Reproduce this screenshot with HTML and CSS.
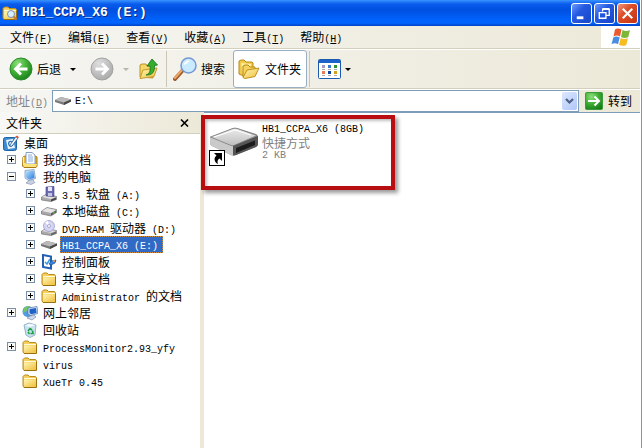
FILE: index.html
```
<!DOCTYPE html>
<html lang="zh-CN">
<head>
    <meta charset="UTF-8">
    <meta name="viewport" content="width=device-width, initial-scale=1.0">
    <title>HB1_CCPA_X6 (E:)</title>
    <link rel="stylesheet" href="styles.css">
</head>
<body>
    <!-- shared icons -->
    <svg class="defs" width="0" height="0">
        <defs>
            <linearGradient id="gFolder" x1="0" y1="0" x2="1" y2="1">
                <stop offset="0" stop-color="#fff6b5"/><stop offset="1" stop-color="#f0bf3c"/>
            </linearGradient>
            <linearGradient id="gMetal" x1="0" y1="0" x2="0" y2="1">
                <stop offset="0" stop-color="#ececec"/><stop offset="1" stop-color="#bdbdbd"/>
            </linearGradient>
            <radialGradient id="gGreen" cx=".35" cy=".25" r=".85">
                <stop offset="0" stop-color="#8be07a"/><stop offset=".5" stop-color="#3fae36"/><stop offset="1" stop-color="#157a18"/>
            </radialGradient>
            <radialGradient id="gGrey" cx=".35" cy=".25" r=".85">
                <stop offset="0" stop-color="#dedede"/><stop offset="1" stop-color="#a6a6a6"/>
            </radialGradient>
            <linearGradient id="gBlue" x1="0" y1="0" x2="1" y2="1">
                <stop offset="0" stop-color="#b4e2ff"/><stop offset="1" stop-color="#2a78dc"/>
            </linearGradient>
            <symbol id="i-folder" viewBox="0 0 16 16">
                <path d="M1 13V3.500L2.500 2H6l1.500 1.500H13.500L14.500 5v8.500L13.500 14.500H2z" fill="#f5cf5b" stroke="#b98a1c"/>
                <path d="M2 6.500h12v7H2z" fill="url(#gFolder)"/>
                <path d="M2 5.500h12" stroke="#fffbd8"/>
                <path d="M2 14.500h12.500V6" fill="none" stroke="#9a7010"/>
            </symbol>
            <symbol id="i-drive" viewBox="0 0 16 16">
                <path d="M0 7l6-3 10 2.500v2L9 12 0 9z" fill="#777"/>
                <path d="M0 7l6-3 10 2.500-7 3z" fill="#b9b9b9"/>
                <path d="M9 9.500l7-3v2L9 12z" fill="#484848"/>
            </symbol>
            <symbol id="i-disk" viewBox="0 0 16 16">
                <path d="M.5 8L6 4.500l9.500 2v3L10 13 .5 11z" fill="#a8a8a8" stroke="#666" stroke-width=".6"/>
                <path d="M1 8l5-3 9 2-5 3z" fill="#e6e6e6"/>
                <path d="M10 10.500l5-3v2l-5 3z" fill="#555"/>
                <path d="M12 10.300l1.500-1" stroke="#5e5"/>
            </symbol>
            <symbol id="i-floppy" viewBox="0 0 16 16">
                <path d="M.5 11L5 8.500l10.500 2v3L10 15.500.5 14z" fill="#aaa" stroke="#666" stroke-width=".6"/>
                <path d="M1 11l4-2 10 2-5 2z" fill="#e2e2e2"/>
                <path d="M10 13.500l5-2v2l-5 2z" fill="#444"/>
                <path d="M5 1l8-.5v10L5 10z" fill="#6a6cb4" stroke="#40407c" stroke-width=".6"/>
                <path d="M7 1h4v4H7z" fill="#e6e6f8"/>
                <path d="M7 7h4v3H7z" fill="#c4c4e4"/>
            </symbol>
            <symbol id="i-dvd" viewBox="0 0 16 16">
                <path d="M.5 11L5 8.500l10.500 2v3L10 15.500.5 14z" fill="#aaa" stroke="#666" stroke-width=".6"/>
                <path d="M1 11l4-2 10 2-5 2z" fill="#ddd"/>
                <circle cx="8" cy="6" r="5.500" fill="#d7d5f4" stroke="#9391c6" stroke-width=".7"/>
                <path d="M8 6L4 2.500 7 .8z" fill="#fff"/>
                <circle cx="8" cy="6" r="1.500" fill="#fff" stroke="#8080b0" stroke-width=".6"/>
                <path d="M10 13.500l5-2v2l-5 2z" fill="#666"/>
            </symbol>
            <symbol id="i-desktop" viewBox="0 0 16 16">
                <rect x=".5" y="2.500" width="13" height="13" rx="2" fill="#3c8ccf" stroke="#1d63a5"/>
                <path d="M3 5l7-1 2 9-7 1z" fill="#eef7ff"/>
                <path d="M10 7c-4-2-5 1-4 3s4 1 4-1" fill="none" stroke="#2b75b8" stroke-width="1.300"/>
                <path d="M7 10l6-8.500 2 1.500-6 8-2 .5z" fill="#f5f9fc" stroke="#255d94" stroke-width=".8"/>
                <path d="M12.500 2l2.500 1.500.8-1.500-1.800-1.500z" fill="#e05030"/>
            </symbol>
            <symbol id="i-docs" viewBox="0 0 16 16">
                <path d="M1 5l2-1h10l2 1v9l-1 1.500H2L.5 14z" fill="#eab938" stroke="#a87813"/>
                <path d="M4 .5h6l3 2.500v9H4z" fill="#fff" stroke="#6689ba" stroke-width=".8"/>
                <path d="M6 3h4M6 5h5M6 7h5M6 9h5" stroke="#8aaee0"/>
                <path d="M1 11h3l1 1h10l-1 3H2z" fill="#fbe27a"/>
                <path d="M1.500 5v8" stroke="#fff2a8"/>
            </symbol>
            <symbol id="i-computer" viewBox="0 0 16 16">
                <path d="M3 1.500L12 .5l1.500 9-7 2L3 9z" fill="#d8e6f4" stroke="#6a8cb4" stroke-width=".7"/>
                <path d="M4 2.500l7.500-1 1 7.500-6 1.500L4 8z" fill="url(#gBlue)"/>
                <path d="M7 11.500l4-1 1 2 1 1-4 2-5-1.500z" fill="#c9d2e2" stroke="#7a8aa6" stroke-width=".6"/>
            </symbol>
            <symbol id="i-control" viewBox="0 0 16 16">
                <path d="M2 1l8 1.500v12L2 13z" fill="#fff" stroke="#2360b4" stroke-width="2"/>
                <path d="M4 8l2 2 3-5" stroke="#3a9bdc" stroke-width="1.500" fill="none"/>
                <path d="M8 10l2-3 5-1-1 3-4 2z" fill="#3c82d8" stroke="#184e96" stroke-width=".7"/>
                <circle cx="13" cy="7" r="1" fill="#f5a050"/>
            </symbol>
            <symbol id="i-network" viewBox="0 0 16 16">
                <circle cx="6" cy="6.500" r="5.500" fill="#4f9ae0"/>
                <path d="M2 3c2-2 5-3 6-1L5 6 1 8z" fill="#74c46a"/>
                <path d="M6 3l9-1.500.8 7-7 2L6 9z" fill="#dde8f6" stroke="#4773a8" stroke-width=".7"/>
                <path d="M7.500 4l6.500-1 .6 5L9 9.300 7.500 8z" fill="#1e62c8"/>
                <path d="M8 11l4-1 2 2-4 3-5-2z" fill="#cdd8ea" stroke="#6b82a4" stroke-width=".6"/>
            </symbol>
            <symbol id="i-bin" viewBox="0 0 16 16">
                <path d="M2 3l5-2 7 2-1 10-5 2.500L4 13z" fill="#c9e2ef" stroke="#7fa6bd" stroke-width=".8"/>
                <path d="M3 3.500l5 1.500 5.500-2L7.500 1.800z" fill="#f4fbff"/>
                <path d="M6 9l2-2.500 2 1.500M10.500 8.500l.5 3H8.500M7.500 12L6 10" stroke="#1fa045" stroke-width="1.600" fill="none"/>
            </symbol>
            <symbol id="i-open" viewBox="0 0 22 20">
                <path d="M1 15V2l2-1h3l2 2h6l1 1v6L8 18z" fill="#f2ca49" stroke="#b8891b"/>
                <path d="M3 4l10 1v6l-8 5z" fill="#fff09b"/>
                <path d="M5 18V7l2-1h3l2 2h5v3" fill="#f5d35c" stroke="#b8891b"/>
                <path d="M5 18.500L9 11l12-2-4 8.500L7 19.500z" fill="url(#gFolder)" stroke="#c09120"/>
            </symbol>
        </defs>
    </svg>

    <div class="window">
        <header class="titlebar">
            <svg class="title-icon" viewBox="0 0 16 16">
                <use href="#i-folder"/>
                <circle cx="9" cy="9" r="3.500" fill="#d8efff" stroke="#7894b8"/>
                <path d="M11.500 11.500l3 3" stroke="#c9763c" stroke-width="2"/>
            </svg>
            <h1>HB1_CCPA_X6 (E:)</h1>
            <div class="win-buttons">
                <button class="win-btn" aria-label="最小化"><svg viewBox="0 0 20 20"><path d="M5 14.500h7" stroke="#fff" stroke-width="3"/></svg></button>
                <button class="win-btn" aria-label="还原"><svg viewBox="0 0 20 20"><path d="M8 8V5.500h7V12h-3M8 5h7M4.500 9h7v6h-7zM4 9h8" fill="none" stroke="#fff" stroke-width="1.400"/></svg></button>
                <button class="win-btn close" aria-label="关闭"><svg viewBox="0 0 20 20"><path d="M5 5l10 10M15 5L5 15" stroke="#fff" stroke-width="2.200"/></svg></button>
            </div>
        </header>

        <nav class="menubar">
            <button>文件<span class="en">(<u>F</u>)</span></button>
            <button>编辑<span class="en">(<u>E</u>)</span></button>
            <button>查看<span class="en">(<u>V</u>)</span></button>
            <button>收藏<span class="en">(<u>A</u>)</span></button>
            <button>工具<span class="en">(<u>T</u>)</span></button>
            <button>帮助<span class="en">(<u>H</u>)</span></button>
            <div class="flag">
                <svg viewBox="0 0 20 18">
                    <path d="M4 1.500c2-1.500 4-1 6.500 0L9 8.500c-2-1.200-4.500-1.300-6.500 0z" fill="#ea5a2c"/>
                    <path d="M11.500 2c2.500 1.500 5 1.300 7.500 0l-1.700 7c-2.300 1.300-5 1.200-7.300 0z" fill="#7db73a"/>
                    <path d="M2.300 9.500c2-1.300 4.200-1.200 6.400 0L7 16.300c-2-1.300-4.300-1.300-6.500 0z" fill="#4a8de0"/>
                    <path d="M9.700 10c2.500 1.400 5 1.300 7.300.1L15.300 17c-2.500 1.200-5 1.100-7.300-.2z" fill="#f6bc22"/>
                </svg>
            </div>
        </nav>

        <div class="toolbar">
            <button class="tool back">
                <svg class="round" viewBox="0 0 24 24"><circle cx="12" cy="12" r="11" fill="url(#gGreen)" stroke="#2c8a2a"/><path d="M18.500 12H7M12 6.500L6.500 12l5.500 5.500" fill="none" stroke="#fff" stroke-width="2.800"/></svg>
                <span>后退</span>
                <i class="arrow"></i>
            </button>
            <button class="tool forward" aria-label="前进" disabled>
                <svg class="round" viewBox="0 0 24 24"><circle cx="12" cy="12" r="11" fill="url(#gGrey)" stroke="#a3a3a3"/><path d="M5.500 12H17M12 6.500l5.500 5.500-5.500 5.500" fill="none" stroke="#fff" stroke-width="2.800"/></svg>
                <i class="arrow"></i>
            </button>
            <button class="tool up" aria-label="向上">
                <svg class="up-icon" viewBox="0 0 20 22">
                    <path d="M1 19V7l2-1h4l1 2h6v12z" fill="#f4d766" stroke="#bd9328"/>
                    <path d="M1 20.500L4 12l14-2-3 8.500z" fill="url(#gFolder)" stroke="#c39a2c"/>
                    <path d="M7 17c4-1 4.500-5 4-9H8l5-7 5.500 6-3 .5c.5 6-2 10-8.500 9.500z" fill="#35ad2f" stroke="#167018" stroke-width=".8"/>
                </svg>
            </button>
            <span class="sep"></span>
            <button class="tool search">
                <svg class="round" viewBox="0 0 24 24">
                    <path d="M2 22l8-9" stroke="#9b5b2a" stroke-width="4" stroke-linecap="round"/>
                    <path d="M2 21l7-8" stroke="#f0a868" stroke-width="2" stroke-linecap="round"/>
                    <circle cx="15.500" cy="8.500" r="7.500" fill="#c8ebff" stroke="#7898d4" stroke-width="1.500"/>
                    <path d="M10.500 8c.5-3 3-5 6-4.500-1 2-3 4-6 4.500z" fill="#fff"/>
                </svg>
                <span>搜索</span>
            </button>
            <button class="tool folders" aria-pressed="true">
                <svg class="open-icon"><use href="#i-open"/></svg>
                <span>文件夹</span>
            </button>
            <span class="sep"></span>
            <button class="tool views" aria-label="查看">
                <svg class="views-icon" viewBox="0 0 23 20">
                    <rect x=".5" y=".5" width="22" height="19" rx="1" fill="#fff" stroke="#1c5ab0"/>
                    <path d="M1 1h21v3H1z" fill="#1b63cb"/>
                    <path d="M4 6h3v3H4z" fill="#a09bc4"/><path d="M10 6h3v3h-3z" fill="#3c78cc"/><path d="M16 6h3v3h-3z" fill="#2b9334"/>
                    <path d="M4 12h3v3H4z" fill="#ec7a55"/><path d="M10 12h3v3h-3z" fill="#12459a"/><path d="M16 12h3v3h-3z" fill="#cfa11c"/>
                    <path d="M4 10.500h3M10 10.500h3M16 10.500h3M4 16.500h3M10 16.500h3M16 16.500h3" stroke="#aaa"/>
                </svg>
                <i class="arrow"></i>
            </button>
        </div>

        <form class="address">
            <label for="path">地址<span class="en">(<u>D</u>)</span></label>
            <div class="combo">
                <svg class="icon"><use href="#i-drive"/></svg>
                <input id="path" class="en" type="text" value="E:\">
                <button type="button" class="drop" aria-label="展开"><svg viewBox="0 0 15 18"><path d="M4 7l3.500 3.500L11 7" fill="none" stroke="#4d6185" stroke-width="2.200"/></svg></button>
            </div>
            <button type="button" class="go">
                <svg viewBox="0 0 18 18"><rect x=".5" y=".5" width="17" height="17" rx="1" fill="url(#gGreen)" stroke="#3b9b3b"/><path d="M3 9h11M9.500 4.500L14 9l-4.500 4.500" fill="none" stroke="#fff" stroke-width="2"/></svg>
                <span>转到</span>
            </button>
        </form>

        <main class="content">
            <aside class="sidebar">
                <div class="side-head">
                    <h2>文件夹</h2>
                    <button aria-label="关闭"><svg viewBox="0 0 9 8"><path d="M1 .5l7 7M8 .5l-7 7" stroke="#000" stroke-width="1.600"/></svg></button>
                </div>
                <ul class="tree">
                    <li class="root"><svg class="icon"><use href="#i-desktop"/></svg><span class="name">桌面</span></li>
                    <li><button class="exp" aria-label="展开"></button><svg class="icon"><use href="#i-docs"/></svg><span class="name">我的文档</span></li>
                    <li><button class="exp open" aria-label="折叠"></button><svg class="icon"><use href="#i-computer"/></svg><span class="name">我的电脑</span></li>
                    <li class="sub"><button class="exp" aria-label="展开"></button><svg class="icon"><use href="#i-floppy"/></svg><span class="name"><span class="en">3.5 </span>软盘<span class="en"> (A:)</span></span></li>
                    <li class="sub"><button class="exp" aria-label="展开"></button><svg class="icon"><use href="#i-disk"/></svg><span class="name">本地磁盘<span class="en"> (C:)</span></span></li>
                    <li class="sub"><button class="exp" aria-label="展开"></button><svg class="icon"><use href="#i-dvd"/></svg><span class="name"><span class="en">DVD-RAM </span>驱动器<span class="en"> (D:)</span></span></li>
                    <li class="sub selected"><button class="exp" aria-label="展开"></button><svg class="icon"><use href="#i-drive"/></svg><span class="name"><span class="en">HB1_CCPA_X6 (E:)</span></span></li>
                    <li class="sub"><button class="exp" aria-label="展开"></button><svg class="icon"><use href="#i-control"/></svg><span class="name">控制面板</span></li>
                    <li class="sub"><button class="exp" aria-label="展开"></button><svg class="icon"><use href="#i-folder"/></svg><span class="name">共享文档</span></li>
                    <li class="sub"><button class="exp" aria-label="展开"></button><svg class="icon"><use href="#i-folder"/></svg><span class="name"><span class="en">Administrator </span>的文档</span></li>
                    <li><button class="exp" aria-label="展开"></button><svg class="icon"><use href="#i-network"/></svg><span class="name">网上邻居</span></li>
                    <li class="leaf"><svg class="icon"><use href="#i-bin"/></svg><span class="name">回收站</span></li>
                    <li><button class="exp" aria-label="展开"></button><svg class="icon"><use href="#i-folder"/></svg><span class="name"><span class="en">ProcessMonitor2.93_yfy</span></span></li>
                    <li class="leaf"><svg class="icon"><use href="#i-folder"/></svg><span class="name"><span class="en">virus</span></span></li>
                    <li class="leaf"><svg class="icon"><use href="#i-folder"/></svg><span class="name"><span class="en">XueTr 0.45</span></span></li>
                </ul>
            </aside>
            <section class="files">
                <div class="file">
                    <svg class="file-icon" viewBox="0 0 50 44">
                        <path d="M1 14L24 5q2-.5 4 0l19 6q2 1 2 3v7q0 2-2 3L27 32q-3 1-5 0L3 23q-2-1-2-3z" fill="#8c8c8c"/>
                        <path d="M1 14v6q0 2 2 3l19 9q1 .5 2 .5V23z" fill="#c9c9c9"/>
                        <path d="M1.500 14L24 5.500q2-.5 4 0L48 12.500 25 22.500q-1 .5-3 0z" fill="url(#gMetal)" stroke="#777" stroke-width=".7"/>
                        <path d="M24 23L49 13v8q0 2-2 3L27 32q-2 .7-3 .3z" fill="#555"/>
                        <path d="M27 25l19-7.500V22l-19 8z" fill="#1c1c1c"/>
                        <path d="M5 14L26 7l16 5" fill="none" stroke="#fff"/>
                        <rect x=".5" y="27.500" width="15" height="15" fill="#fff" stroke="#000"/>
                        <path d="M5 30h8v8l-2.500-2.500c-2 1-2.500 3-1.500 5.500-4-2-4.500-6-1.500-8.500z" fill="#000"/>
                    </svg>
                    <div class="file-text">
                        <div class="en">HB1_CCPA_X6 (8GB)</div>
                        <div class="info">快捷方式</div>
                        <div class="info en">2 KB</div>
                    </div>
                </div>
                <div class="highlight"></div>
            </section>
        </main>
    </div>
</body>
</html>
```
FILE: styles.css
```
* {
    box-sizing: border-box;
}
body {
    margin: 0;
    height: 100vh;
    background: #fff;
    color: #000;
    font: 12px/16px "Noto Sans CJK SC", sans-serif;
    overflow: hidden;
}
.defs {
    position: absolute;
}
svg {
    display: block;
    flex: none;
}
button {
    border: none;
    background: none;
    padding: 0;
    margin: 0;
    font: inherit;
    color: inherit;
    white-space: nowrap;
}
h1, h2 {
    margin: 0;
    font-size: 12px;
    font-weight: normal;
}
/* latin text is half the width of a chinese character */
.en {
    font-family: "Liberation Mono", monospace;
    font-size: 10px;
    white-space: pre;
}
span.en {
    line-height: 10px;
}
.window {
    display: flex;
    flex-direction: column;
    height: 100%;
    margin-right: 2px;
    border-right: 1px solid #8f9299;
    padding-right: 1px;
    background: #fff;
}

/* title bar */
.titlebar {
    display: flex;
    align-items: center;
    height: 26px;
    padding: 0 2px;
    background: linear-gradient(#3a93ff 0, #0a5cec 4px, #0050e0 10px, #0061fa 19px, #0064ff 23px, #0042c4 26px);
}
.title-icon {
    width: 16px;
    height: 16px;
}
.titlebar h1 {
    flex: 1;
    margin-left: 4px;
    color: #fff;
    font: bold 13px/16px "Liberation Mono", monospace;
    text-shadow: 1px 1px #0a2a80;
}
.win-buttons {
    display: flex;
    gap: 2px;
}
.win-btn {
    width: 21px;
    height: 21px;
    border: 1px solid #fff;
    border-radius: 3px;
    background: linear-gradient(135deg, #6f9bff, #2459e0 40%, #1746c8);
}
.win-btn.close {
    background: linear-gradient(135deg, #f0967c, #dc4d28 40%, #c43410);
}
.win-btn svg {
    width: 19px;
    height: 19px;
}

/* menu */
.menubar {
    display: flex;
    align-items: center;
    gap: 16px;
    height: 23px;
    padding-left: 10px;
    background: linear-gradient(90deg, #f5f5f2, #ece9d8);
    border-bottom: 1px solid #d2cfbd;
}
.flag {
    display: flex;
    align-items: center;
    justify-content: center;
    align-self: stretch;
    width: 39px;
    margin-left: auto;
    background: #fff;
}
.flag svg {
    width: 20px;
    height: 18px;
}

/* toolbar */
.toolbar {
    display: flex;
    align-items: center;
    height: 40px;
    padding-left: 9px;
    background: linear-gradient(90deg, #f5f5f2, #ece9d8);
    border-top: 1px solid #fff;
    border-bottom: 1px solid #d2cfbd;
}
.tool {
    display: flex;
    align-items: center;
    gap: 4px;
}
.round {
    width: 24px;
    height: 24px;
}
.arrow {
    border: 3px solid transparent;
    border-top-color: #000;
    border-bottom: none;
}
.back .arrow, .forward .arrow {
    margin-left: 5px;
}
.forward {
    margin-left: 14px;
}
.forward .arrow {
    border-top-color: #b5b5ac;
}
.up {
    margin: 0 7px 0 10px;
}
.up-icon {
    width: 20px;
    height: 22px;
}
.sep {
    width: 1px;
    height: 36px;
    background: #c9c6b5;
}
.search {
    margin: 0 8px 0 6px;
}
.folders {
    height: 38px;
    gap: 5px;
    margin-right: 2px;
    padding: 0 5px 0 4px;
    border: 1px solid #9aaec2;
    border-radius: 3px;
    background: #fff;
}
.open-icon {
    width: 22px;
    height: 20px;
}
.views {
    margin-left: 8px;
}
.views-icon {
    width: 23px;
    height: 20px;
}

/* address */
.address {
    display: flex;
    align-items: center;
    height: 23px;
    padding-left: 6px;
    background: linear-gradient(90deg, #f5f5f2, #ece9d8);
    border-top: 1px solid #fff;
}
.address label {
    width: 46px;
    color: #858585;
}
.combo {
    display: flex;
    align-items: center;
    flex: 1;
    height: 22px;
    padding-left: 2px;
    border: 1px solid #7f9db9;
    background: #fff;
}
.icon {
    width: 16px;
    height: 16px;
}
.combo input {
    flex: 1;
    min-width: 0;
    border: none;
    outline: none;
    padding: 0 0 0 4px;
    background: none;
}
.drop {
    width: 15px;
    height: 18px;
    margin-right: 1px;
    border-radius: 2px;
    background: linear-gradient(135deg, #dce8ff, #b0c6f8);
}
.go {
    display: flex;
    align-items: center;
    gap: 5px;
    padding: 0 8px 0 6px;
}
.go svg {
    width: 18px;
    height: 18px;
}

/* content */
.content {
    display: flex;
    flex: 1;
    min-height: 0;
}
.sidebar {
    width: 204px;
    border-right: 4px solid #ece9d8;
}
.side-head {
    display: flex;
    align-items: center;
    justify-content: space-between;
    height: 22px;
    padding: 0 11px 0 6px;
    background: linear-gradient(90deg, #f8f8f6, #ece9d8);
    border-bottom: 1px solid #d2cfbd;
}
.side-head svg {
    width: 9px;
    height: 8px;
}
.tree {
    list-style: none;
    margin: 0;
    padding: 0;
}
.tree li {
    display: flex;
    align-items: center;
    height: 17px;
    padding-left: 7px;
    white-space: nowrap;
}
.tree .root {
    padding-left: 3px;
}
.tree .leaf {
    padding-left: 22px;
}
.tree .sub {
    padding-left: 26px;
}
.exp {
    width: 9px;
    height: 9px;
    margin-right: 6px;
    border: 1px solid #7b90a8;
    background:
        linear-gradient(#000, #000) center / 5px 1px no-repeat,
        linear-gradient(#000, #000) center / 1px 5px no-repeat,
        #f8f8f4;
}
.exp.open {
    background: linear-gradient(#000, #000) center / 5px 1px no-repeat, #f8f8f4;
}
.name {
    margin-left: 3px;
    padding: 0 2px;
}
.selected .name {
    height: 17px;
    padding: 0 4px 0 1px;
    border: 1px dotted #d08c3c;
    line-height: 14px;
    background: #316ac5;
    color: #fff;
}
.files {
    position: relative;
    flex: 1;
    border-top: 1px solid #7f9db9;
}
.file {
    display: flex;
    gap: 3px;
    padding: 10px 0 0 5px;
}
.file-icon {
    width: 50px;
    height: 44px;
}
.file-text {
    line-height: 13px;
}
.info {
    color: #808080;
}
/* red frame around the shortcut */
.highlight {
    position: absolute;
    left: -3px;
    top: 2px;
    width: 194px;
    height: 75px;
    border: 4px solid #b80e12;
    box-shadow: 3px 3px 4px rgba(0, 0, 0, .4), inset 2px 2px 3px rgba(0, 0, 0, .25);
}
```
